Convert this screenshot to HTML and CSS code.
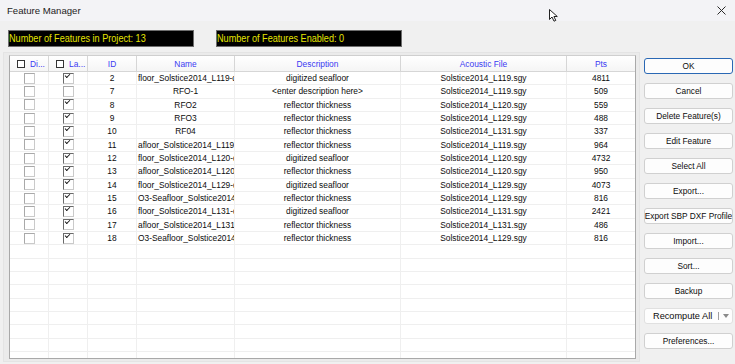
FILE: index.html
```html
<!DOCTYPE html>
<html lang="en">
<head>
  <meta charset="UTF-8">
  <title>Feature Manager</title>
  <link rel="stylesheet" href="styles.css">
</head>
<body>
  <div class="window">
    <div class="titlebar">
      <span class="title">Feature Manager</span>
      <svg class="cursor" width="10" height="13" viewBox="0 0 10 13">
        <path d="M0.5 0.5 L0.5 10.5 L3 8 L5 12.2 L6.8 11.4 L4.9 7.5 L8.3 7.5 Z" fill="#fff" stroke="#222" stroke-width="1" stroke-linejoin="round"/>
      </svg>
      <svg class="close" width="9" height="9" viewBox="0 0 9 9">
        <path d="M0.5 0.5 L8.5 8.5 M8.5 0.5 L0.5 8.5" stroke="#2a2a2a" stroke-width="1"/>
      </svg>
    </div>

    <div class="status">
      <div class="counter"><span>Number of Features in Project: 13</span></div>
      <div class="counter"><span>Number of Features Enabled: 0</span></div>
    </div>

    <div class="main">
      <div class="frame">
        <div class="grid">
          <div class="row head">
            <div class="cell hcheck"><span class="hbox"></span>Di...</div>
            <div class="cell hcheck"><span class="hbox"></span>La...</div>
            <div class="cell">ID</div>
            <div class="cell">Name</div>
            <div class="cell">Description</div>
            <div class="cell">Acoustic File</div>
            <div class="cell">Pts</div>
          </div>

          <div class="row">
            <div class="cell"><span class="cb"></span></div>
            <div class="cell"><span class="cb on"></span></div>
            <div class="cell">2</div>
            <div class="cell name">floor_Solstice2014_L119-d</div>
            <div class="cell">digitized seafloor</div>
            <div class="cell">Solstice2014_L119.sgy</div>
            <div class="cell">4811</div>
          </div>
          <div class="row">
            <div class="cell"><span class="cb"></span></div>
            <div class="cell"><span class="cb"></span></div>
            <div class="cell">7</div>
            <div class="cell">RFO-1</div>
            <div class="cell">&lt;enter description here&gt;</div>
            <div class="cell">Solstice2014_L119.sgy</div>
            <div class="cell">509</div>
          </div>
          <div class="row">
            <div class="cell"><span class="cb"></span></div>
            <div class="cell"><span class="cb on"></span></div>
            <div class="cell">8</div>
            <div class="cell">RFO2</div>
            <div class="cell">reflector thickness</div>
            <div class="cell">Solstice2014_L120.sgy</div>
            <div class="cell">559</div>
          </div>
          <div class="row">
            <div class="cell"><span class="cb"></span></div>
            <div class="cell"><span class="cb on"></span></div>
            <div class="cell">9</div>
            <div class="cell">RFO3</div>
            <div class="cell">reflector thickness</div>
            <div class="cell">Solstice2014_L129.sgy</div>
            <div class="cell">488</div>
          </div>
          <div class="row">
            <div class="cell"><span class="cb"></span></div>
            <div class="cell"><span class="cb on"></span></div>
            <div class="cell">10</div>
            <div class="cell">RF04</div>
            <div class="cell">reflector thickness</div>
            <div class="cell">Solstice2014_L131.sgy</div>
            <div class="cell">337</div>
          </div>
          <div class="row">
            <div class="cell"><span class="cb"></span></div>
            <div class="cell"><span class="cb on"></span></div>
            <div class="cell">11</div>
            <div class="cell name">afloor_Solstice2014_L119-</div>
            <div class="cell">reflector thickness</div>
            <div class="cell">Solstice2014_L119.sgy</div>
            <div class="cell">964</div>
          </div>
          <div class="row">
            <div class="cell"><span class="cb"></span></div>
            <div class="cell"><span class="cb on"></span></div>
            <div class="cell">12</div>
            <div class="cell name">floor_Solstice2014_L120-d</div>
            <div class="cell">digitized seafloor</div>
            <div class="cell">Solstice2014_L120.sgy</div>
            <div class="cell">4732</div>
          </div>
          <div class="row">
            <div class="cell"><span class="cb"></span></div>
            <div class="cell"><span class="cb on"></span></div>
            <div class="cell">13</div>
            <div class="cell name">afloor_Solstice2014_L120-</div>
            <div class="cell">reflector thickness</div>
            <div class="cell">Solstice2014_L120.sgy</div>
            <div class="cell">950</div>
          </div>
          <div class="row">
            <div class="cell"><span class="cb"></span></div>
            <div class="cell"><span class="cb on"></span></div>
            <div class="cell">14</div>
            <div class="cell name">floor_Solstice2014_L129-d</div>
            <div class="cell">digitized seafloor</div>
            <div class="cell">Solstice2014_L129.sgy</div>
            <div class="cell">4073</div>
          </div>
          <div class="row">
            <div class="cell"><span class="cb"></span></div>
            <div class="cell"><span class="cb on"></span></div>
            <div class="cell">15</div>
            <div class="cell name">O3-Seafloor_Solstice2014</div>
            <div class="cell">reflector thickness</div>
            <div class="cell">Solstice2014_L129.sgy</div>
            <div class="cell">816</div>
          </div>
          <div class="row">
            <div class="cell"><span class="cb"></span></div>
            <div class="cell"><span class="cb on"></span></div>
            <div class="cell">16</div>
            <div class="cell name">floor_Solstice2014_L131-d</div>
            <div class="cell">digitized seafloor</div>
            <div class="cell">Solstice2014_L131.sgy</div>
            <div class="cell">2421</div>
          </div>
          <div class="row">
            <div class="cell"><span class="cb"></span></div>
            <div class="cell"><span class="cb on"></span></div>
            <div class="cell">17</div>
            <div class="cell name">afloor_Solstice2014_L131</div>
            <div class="cell">reflector thickness</div>
            <div class="cell">Solstice2014_L131.sgy</div>
            <div class="cell">486</div>
          </div>
          <div class="row">
            <div class="cell"><span class="cb"></span></div>
            <div class="cell"><span class="cb on"></span></div>
            <div class="cell">18</div>
            <div class="cell name">O3-Seafloor_Solstice2014</div>
            <div class="cell">reflector thickness</div>
            <div class="cell">Solstice2014_L129.sgy</div>
            <div class="cell">816</div>
          </div>

          <!-- empty rows below the data -->
          <div class="row"><div class="cell"></div><div class="cell"></div><div class="cell"></div><div class="cell"></div><div class="cell"></div><div class="cell"></div><div class="cell"></div></div>
          <div class="row"><div class="cell"></div><div class="cell"></div><div class="cell"></div><div class="cell"></div><div class="cell"></div><div class="cell"></div><div class="cell"></div></div>
          <div class="row"><div class="cell"></div><div class="cell"></div><div class="cell"></div><div class="cell"></div><div class="cell"></div><div class="cell"></div><div class="cell"></div></div>
          <div class="row"><div class="cell"></div><div class="cell"></div><div class="cell"></div><div class="cell"></div><div class="cell"></div><div class="cell"></div><div class="cell"></div></div>
          <div class="row"><div class="cell"></div><div class="cell"></div><div class="cell"></div><div class="cell"></div><div class="cell"></div><div class="cell"></div><div class="cell"></div></div>
          <div class="row"><div class="cell"></div><div class="cell"></div><div class="cell"></div><div class="cell"></div><div class="cell"></div><div class="cell"></div><div class="cell"></div></div>
          <div class="row"><div class="cell"></div><div class="cell"></div><div class="cell"></div><div class="cell"></div><div class="cell"></div><div class="cell"></div><div class="cell"></div></div>
          <div class="row"><div class="cell"></div><div class="cell"></div><div class="cell"></div><div class="cell"></div><div class="cell"></div><div class="cell"></div><div class="cell"></div></div>
          <div class="row"><div class="cell"></div><div class="cell"></div><div class="cell"></div><div class="cell"></div><div class="cell"></div><div class="cell"></div><div class="cell"></div></div>
        </div>
      </div>

      <div class="buttons">
        <button class="btn default">OK</button>
        <button class="btn">Cancel</button>
        <button class="btn">Delete Feature(s)</button>
        <button class="btn">Edit Feature</button>
        <button class="btn">Select All</button>
        <button class="btn">Export...</button>
        <button class="btn">Export SBP DXF Profile</button>
        <button class="btn">Import...</button>
        <button class="btn">Sort...</button>
        <button class="btn">Backup</button>
        <button class="btn split"><span>Recompute All</span><span class="divider"></span><span class="arrow"></span></button>
        <button class="btn">Preferences...</button>
      </div>
    </div>
  </div>
</body>
</html>
```

FILE: styles.css
```css
* { margin: 0; padding: 0; box-sizing: border-box; }

body {
  font-family: 'Liberation Sans', Arial, sans-serif;
  background: #f0f0f0;
  color: #0c0c0c;
}

.window {
  width: 735px;
  height: 364px;
  overflow: hidden;
}

.titlebar {
  height: 21px;
  background: #f3f3f6;
  display: flex;
  align-items: center;
  justify-content: space-between;
  padding: 0 9px 0 7px;
  position: relative;
  font-size: 9.6px;
  color: #1c1c1c;
}

.cursor {
  position: absolute;
  left: 549px;
  top: 9px;
}

.status {
  display: flex;
  gap: 22px;
  margin: 9px 0 0 8px;
}

.counter {
  width: 186px;
  height: 17px;
  background: #000;
  border: 1px solid #6d6d6d;
  color: #e4e400;
  font-size: 11.4px;
  line-height: 15px;
  white-space: nowrap;
  overflow: hidden;
}

/* the dialog uses a narrow face here */
.counter span {
  display: inline-block;
  transform: scaleX(0.8);
  transform-origin: left center;
}

.main {
  display: flex;
  margin-top: 5px;
}

.frame {
  margin-left: 3px;
  border: 1px solid #e4e4e4;
  background: #ebebeb;
  padding: 2px 3px 2px 5px;
}

.grid {
  width: 627px;
  height: 304px;
  border: 1px solid #a9a9a9;
  border-top-color: #cfcfcf;
  background: #fff;
  overflow: hidden;
  font-size: 8.4px;
}

.row {
  display: grid;
  grid-template-columns: 39px 39px 49px 98px 166px 166px 68px;
  height: 13.33px;
  border-bottom: 1px solid #efefef;
}

.cell {
  border-right: 1px solid #efefef;
  display: flex;
  align-items: center;
  justify-content: center;
  white-space: nowrap;
  overflow: hidden;
}

.row .cell:last-child { border-right: none; }

.row.head {
  height: 16px;
  background: linear-gradient(#ffffff, #f5f5f5);
  border-bottom: 1px solid #d6d6d6;
  color: #3a3af2;
}

.head .cell { border-right-color: #d6d6d6; }

.cell.hcheck {
  justify-content: flex-start;
  padding-left: 7px;
  gap: 5px;
}

.hbox {
  width: 8px;
  height: 8px;
  border: 1px solid #333;
  background: #fff;
}

.cell.name {
  justify-content: flex-start;
  padding-left: 1px;
}

.cb {
  width: 11px;
  height: 11px;
  border: 1px solid #cacaca;
  border-top-color: #a9a9a9;
  border-left-color: #a9a9a9;
  background: #fff;
  position: relative;
}

.cb.on {
  border-top-color: #6a6a6a;
  border-left-color: #6a6a6a;
}

.cb.on::after {
  content: "";
  position: absolute;
  left: 1px;
  top: 0;
  width: 3.5px;
  height: 1.8px;
  border-left: 1.4px solid #111;
  border-bottom: 1.4px solid #111;
  transform: rotate(-45deg);
}

.buttons {
  display: flex;
  flex-direction: column;
  gap: 9px;
  margin-left: 4px;
  padding-top: 6px;
}

.btn {
  width: 89px;
  height: 16px;
  border: 1px solid #d0d0d0;
  border-radius: 3px;
  background: #fdfdfd;
  font-family: 'Liberation Sans', Arial, sans-serif;
  font-size: 8.3px;
  color: #0c0c0c;
  display: flex;
  align-items: center;
  justify-content: center;
  white-space: nowrap;
}

.btn.default { border-color: #2a68b4; }

.btn.split {
  justify-content: flex-start;
  padding: 0 3px 0 8px;
  font-size: 9.2px;
  border-color: #e0e0e0;
}

.divider {
  width: 1px;
  height: 8px;
  background: #a0a0a0;
  margin-left: 6px;
}

.arrow {
  margin-left: 4px;
  border-left: 3.5px solid transparent;
  border-right: 3.5px solid transparent;
  border-top: 4px solid #8a8a8a;
}
```
